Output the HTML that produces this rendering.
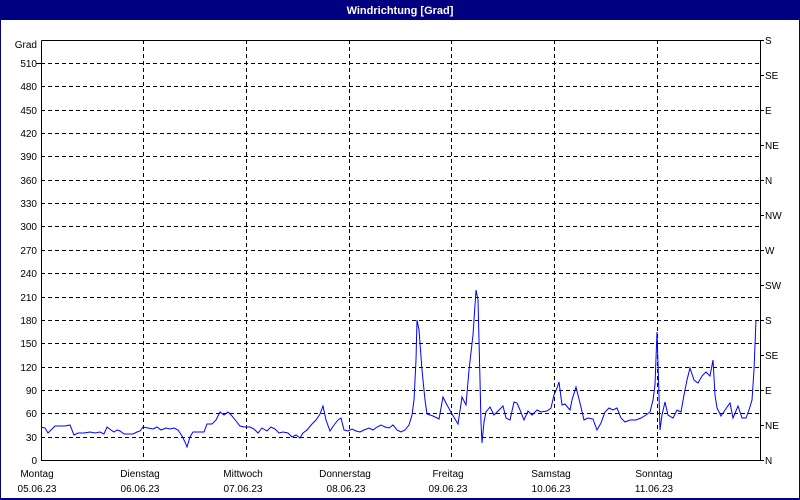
<!DOCTYPE html>
<html><head><meta charset="utf-8"><style>
html,body{margin:0;padding:0;width:800px;height:500px;overflow:hidden;background:#fff;font-family:"Liberation Sans",sans-serif;}
</style></head><body>
<svg width="800" height="500" xmlns="http://www.w3.org/2000/svg" style="display:block">
<rect x="0" y="0" width="800" height="500" fill="#fff"/>
<rect x="0" y="0" width="800" height="20" fill="#000080"/>
<rect x="0.5" y="0.5" width="799" height="499" fill="none" stroke="#000080"/>
<rect x="0" y="498" width="800" height="2" fill="#000080"/>
<text x="400" y="14" fill="#fff" font-size="11" font-weight="bold" text-anchor="middle">Windrichtung [Grad]</text>
<g stroke="#000" stroke-dasharray="4,3" stroke-width="1">
<line x1="41" x2="760" y1="63.5" y2="63.5"/><line x1="41" x2="760" y1="86.5" y2="86.5"/><line x1="41" x2="760" y1="110.5" y2="110.5"/><line x1="41" x2="760" y1="133.5" y2="133.5"/><line x1="41" x2="760" y1="156.5" y2="156.5"/><line x1="41" x2="760" y1="180.5" y2="180.5"/><line x1="41" x2="760" y1="203.5" y2="203.5"/><line x1="41" x2="760" y1="226.5" y2="226.5"/><line x1="41" x2="760" y1="250.5" y2="250.5"/><line x1="41" x2="760" y1="273.5" y2="273.5"/><line x1="41" x2="760" y1="297.5" y2="297.5"/><line x1="41" x2="760" y1="320.5" y2="320.5"/><line x1="41" x2="760" y1="343.5" y2="343.5"/><line x1="41" x2="760" y1="367.5" y2="367.5"/><line x1="41" x2="760" y1="390.5" y2="390.5"/><line x1="41" x2="760" y1="413.5" y2="413.5"/><line x1="41" x2="760" y1="437.5" y2="437.5"/>
<line y1="40" y2="460" x1="143.5" x2="143.5"/><line y1="40" y2="460" x1="246.5" x2="246.5"/><line y1="40" y2="460" x1="349.5" x2="349.5"/><line y1="40" y2="460" x1="451.5" x2="451.5"/><line y1="40" y2="460" x1="554.5" x2="554.5"/><line y1="40" y2="460" x1="657.5" x2="657.5"/>
</g>
<g stroke="#000" stroke-width="1" fill="none">
<polyline points="41.5,40.5 760.5,40.5 760.5,460.5 41.5,460.5 41.5,40.5"/>
<line x1="36" x2="41" y1="63.5" y2="63.5"/>
</g>
<g stroke="#000">
<line x1="760" x2="764" y1="40.5" y2="40.5"/><line x1="760" x2="764" y1="75.5" y2="75.5"/><line x1="760" x2="764" y1="110.5" y2="110.5"/><line x1="760" x2="764" y1="145.5" y2="145.5"/><line x1="760" x2="764" y1="180.5" y2="180.5"/><line x1="760" x2="764" y1="215.5" y2="215.5"/><line x1="760" x2="764" y1="250.5" y2="250.5"/><line x1="760" x2="764" y1="285.5" y2="285.5"/><line x1="760" x2="764" y1="320.5" y2="320.5"/><line x1="760" x2="764" y1="355.5" y2="355.5"/><line x1="760" x2="764" y1="390.5" y2="390.5"/><line x1="760" x2="764" y1="425.5" y2="425.5"/><line x1="760" x2="764" y1="460.5" y2="460.5"/>
</g>
<g font-size="10" fill="#000" text-anchor="end">
<text x="37" y="48">Grad</text>
<text x="37" y="67">510</text><text x="37" y="90">480</text><text x="37" y="114">450</text><text x="37" y="137">420</text><text x="37" y="160">390</text><text x="37" y="184">360</text><text x="37" y="207">330</text><text x="37" y="230">300</text><text x="37" y="254">270</text><text x="37" y="277">240</text><text x="37" y="301">210</text><text x="37" y="324">180</text><text x="37" y="347">150</text><text x="37" y="371">120</text><text x="37" y="394">90</text><text x="37" y="417">60</text><text x="37" y="441">30</text><text x="37" y="464">0</text>
</g>
<g font-size="10" fill="#000">
<text x="765" y="44">S</text><text x="765" y="79">SE</text><text x="765" y="114">E</text><text x="765" y="149">NE</text><text x="765" y="184">N</text><text x="765" y="219">NW</text><text x="765" y="254">W</text><text x="765" y="289">SW</text><text x="765" y="324">S</text><text x="765" y="359">SE</text><text x="765" y="394">E</text><text x="765" y="429">NE</text><text x="765" y="464">N</text>
</g>
<g font-size="10" fill="#000" text-anchor="middle">
<text x="37" y="477">Montag</text><text x="37" y="492">05.06.23</text>
<text x="140" y="477">Dienstag</text><text x="140" y="492">06.06.23</text>
<text x="243" y="477">Mittwoch</text><text x="243" y="492">07.06.23</text>
<text x="345" y="477">Donnerstag</text><text x="346" y="492">08.06.23</text>
<text x="448" y="477">Freitag</text><text x="448" y="492">09.06.23</text>
<text x="551" y="477">Samstag</text><text x="551" y="492">10.06.23</text>
<text x="654" y="477">Sonntag</text><text x="654" y="492">11.06.23</text>
</g>
<polyline fill="none" stroke="#0000ff" stroke-width="1" points="41,427 45,428 48,433 52,429 55,426 60,426 65,426 70,425 74,435 78,433 84,433 90,432 95,433 100,432 104,434 107,427 111,430 114,432 117,430 120,431 124,434 128,434 133,434 137,432 140,431 143,427 148,428 153,429 157,427 161,430 166,428 170,429 174,428 178,430 182,436 185,442 187,447 190,437 193,432 198,432 204,432 207,424 212,424 216,420 220,412 224,415 228,412 232,416 236,421 240,426 244,427 250,427 254,429 258,433 262,428 267,431 271,427 275,429 279,433 283,432 288,433 292,437 296,435 300,438 303,433 307,430 312,424 316,420 320,414 323,406 326,420 330,431 334,425 338,420 341,418 344,430 348,431 352,429 356,431 360,432 364,430 369,428 373,430 377,427 381,425 385,427 389,428 393,425 397,430 401,432 405,430 409,425 412,415 414,400 416,360 417,320 419,330 422,370 425,400 427,414 433,416 439,419 443,397 447,405 452,414 458,424 462,397 466,405 469,370 473,335 476,290 478,300 480,380 481,423 482,443 484,422 486,412 490,407 494,415 499,410 503,406 506,418 510,420 514,402 517,403 520,410 524,420 528,411 532,415 537,410 541,412 547,411 551,408 554,395 557,388 559,382 562,405 565,404 570,410 572,400 576,387 580,403 584,420 588,418 593,419 597,430 601,423 605,412 609,408 613,410 617,408 621,418 625,422 630,420 636,420 641,418 646,415 650,412 653,400 655,385 657,332 659,395 660,430 662,415 665,402 668,415 673,418 677,410 681,412 684,395 687,380 690,368 694,380 698,383 702,376 706,372 710,376 713,360 715,395 717,408 721,416 725,410 730,403 733,418 738,406 742,418 746,418 749,410 752,400 754,370 756,320"/>
</svg>
</body></html>
